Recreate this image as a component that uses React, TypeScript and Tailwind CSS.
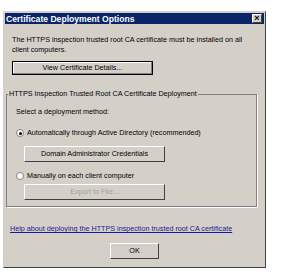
export default function App() {
  return (
    <div className="h-[278px] w-[293px] bg-white pl-[3px] pt-[11px]" style={{ fontFamily: "'Liberation Sans', Arial, sans-serif" }}>
      <div className="flex h-[257px] w-[263px] flex-col whitespace-nowrap border border-[#404040] border-t-[#d4d0c8] border-l-[#d4d0c8] bg-[#d4d0c8] text-[7.2px] leading-[10px] text-black">
        <div className="mx-px mt-px flex h-[11px] items-center justify-between bg-[#0a246a] pl-[1px] pr-[2px]">
          <span className="text-[8.6px] font-bold text-white">Certificate Deployment Options</span>
          <span className="flex h-[9px] w-[10px] items-center justify-center border border-[#404040] border-t-white border-l-white bg-[#d4d0c8] text-[9px] font-bold leading-none text-black">×</span>
        </div>
        <div className="flex flex-1 flex-col px-[8px] pt-[11px]">
          <p>
            The HTTPS inspection trusted root CA certificate must be installed on all
            <br />
            client computers.
          </p>
          <button className="mt-[6px] h-[14px] w-[141px] border border-black bg-[#d4d0c8] text-center leading-none shadow-[inset_-1px_-1px_0_#808080,inset_1px_1px_0_#fff]">
            View Certificate Details...
          </button>
          <fieldset className="-ml-[6px] mt-[14px] h-[118px] border border-[#808080] pl-[9px] pr-[8px] shadow-[1px_1px_0_#fff]">
            <legend className="-ml-[8px] px-[1px]">HTTPS Inspection Trusted Root CA Certificate Deployment</legend>
            <p className="mt-[8px]">Select a deployment method:</p>
            <div className="mt-[11px] flex items-center gap-[3px]">
              <span className="flex h-[8px] w-[8px] items-center justify-center rounded-full border border-[#808080] bg-white">
                <span className="h-[3px] w-[3px] rounded-full bg-black" />
              </span>
              <span>Automatically through Active Directory (recommended)</span>
            </div>
            <button className="mt-[8px] ml-[8px] block h-[16px] w-[141px] border border-[#404040] border-t-white border-l-white bg-[#d4d0c8] text-center leading-none">
              Domain Administrator Credentials
            </button>
            <div className="mt-[9px] flex items-center gap-[3px]">
              <span className="h-[8px] w-[8px] rounded-full border border-[#808080] bg-white" />
              <span>Manually on each client computer</span>
            </div>
            <button className="mt-[3px] ml-[8px] block h-[16px] w-[141px] border border-[#404040] border-t-white border-l-white bg-[#d4d0c8] text-center leading-none text-[#a0a0a0]">
              Export to File...
            </button>
          </fieldset>
          <a className="mt-[17px] -ml-[2px] text-[#1a1a9a] underline">Help about deploying the HTTPS inspection trusted root CA certificate</a>
          <button className="mx-auto mt-[9px] h-[16px] w-[49px] border border-[#404040] border-t-white border-l-white bg-[#d4d0c8] text-center leading-none">
            OK
          </button>
        </div>
      </div>
    </div>
  );
}
